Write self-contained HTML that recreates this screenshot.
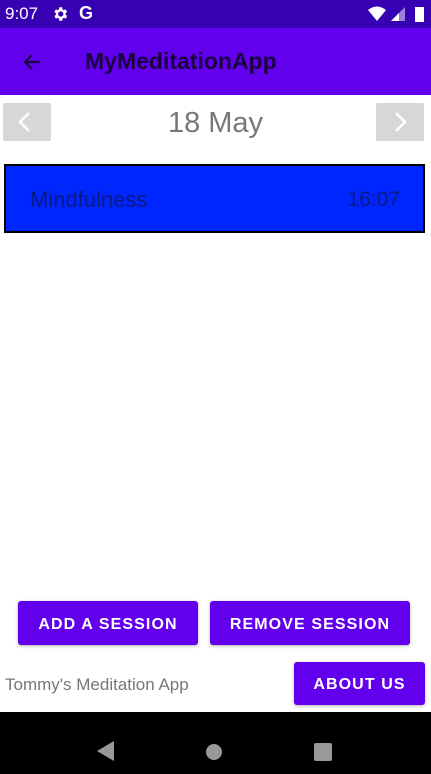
<!DOCTYPE html>
<html><head><style>
*{margin:0;padding:0;box-sizing:border-box}
body{width:431px;height:774px;position:relative;background:#fff;font-family:"Liberation Sans",sans-serif;overflow:hidden}
.a{position:absolute}
.btn{position:absolute;background:#6200ee;color:#fff;border-radius:3px;font-size:16px;font-weight:bold;letter-spacing:1.1px;display:flex;align-items:center;justify-content:center;padding-top:3px;box-shadow:0 1px 3px rgba(0,0,0,.3)}
</style></head><body>
<div class="a" style="left:0;top:0;width:431px;height:28px;background:#3700b3"></div>
<div class="a" style="left:5px;top:4px;color:#fff;font-size:17px">9:07</div>
<svg class="a" style="left:51px;top:5px" width="18" height="18" viewBox="0 0 24 24"><path fill="#fff" d="M19.4 13a7.5 7.5 0 000-2l2.1-1.6-2-3.5-2.5 1a7 7 0 00-1.7-1L15 3h-4l-.4 2.9a7 7 0 00-1.7 1l-2.5-1-2 3.5L6.6 11a7.5 7.5 0 000 2l-2.1 1.6 2 3.5 2.5-1a7 7 0 001.7 1L11 21h4l.4-2.9a7 7 0 001.7-1l2.5 1 2-3.5zM13 15.5a3.5 3.5 0 110-7 3.5 3.5 0 010 7z"/></svg>
<div class="a" style="left:79px;top:3px;color:#fff;font-size:18px;font-weight:bold">G</div>
<svg class="a" style="left:368px;top:6px" width="60" height="16" viewBox="0 0 60 16"><path fill="#fff" d="M0 4Q9-3 18 4L9 15z"/><path fill="#fff" d="M23 15L37 1V15z" opacity=".5"/><path fill="#fff" d="M23 15L31 7V15z"/><rect x="47" y="1" width="9" height="15" fill="#fff"/></svg>
<div class="a" style="left:0;top:28px;width:431px;height:67px;background:#6200ee"></div>
<svg class="a" style="left:22px;top:52px" width="20" height="20" viewBox="0 0 20 20"><path d="M18 10H3M10 3L3 10l7 7" stroke="#1a0040" stroke-width="2.2" fill="none"/></svg>
<div class="a" style="left:85px;top:48px;font-size:23px;color:#1a0040;font-weight:bold">MyMeditationApp</div>
<div class="a" style="left:3px;top:103px;width:48px;height:38px;background:#d6d7d7;border-radius:2px"></div>
<svg class="a" style="left:3px;top:103px" width="48" height="38"><path d="M26 10l-9 9 9 9" stroke="#fff" stroke-width="2.5" fill="none"/></svg>
<div class="a" style="left:376px;top:103px;width:48px;height:38px;background:#d6d7d7;border-radius:2px"></div>
<svg class="a" style="left:376px;top:103px" width="48" height="38"><path d="M20 10l9 9-9 9" stroke="#fff" stroke-width="2.5" fill="none"/></svg>
<div class="a" style="left:0;width:431px;top:107px;text-align:center;font-size:29px;color:#777">18 May</div>
<div class="a" style="left:4px;top:164px;width:421px;height:69px;background:#0026ff;border:2px solid #000"></div>
<div class="a" style="left:30px;top:187px;font-size:22px;color:#0a1a80">Mindfulness</div>
<div class="a" style="right:31px;top:188px;font-size:21px;color:#0a1a80">16:07</div>
<div class="btn" style="left:18px;top:601px;width:180px;height:44px">ADD A SESSION</div>
<div class="btn" style="left:210px;top:601px;width:200px;height:44px">REMOVE SESSION</div>
<div class="btn" style="left:294px;top:662px;width:131px;height:43px">ABOUT US</div>
<div class="a" style="left:5px;top:675px;font-size:17px;color:#777">Tommy's Meditation App</div>
<div class="a" style="left:0;top:712px;width:431px;height:62px;background:#000"></div>
<svg class="a" style="left:0;top:712px" width="431" height="62"><path d="M114 29V49L97 39z" fill="#999"/><circle cx="214" cy="40" r="8" fill="#999"/><rect x="314" y="31" width="18" height="18" rx="2" fill="#999"/></svg>
</body></html>
